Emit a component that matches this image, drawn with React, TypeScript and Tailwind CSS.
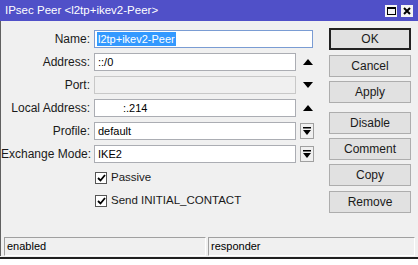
import React from "react";

const Up = () => (
  <svg width="10" height="6" viewBox="0 0 10 6"><path d="M0 6 L5 0 L10 6 Z" fill="#000" /></svg>
);
const Down = () => (
  <svg width="10" height="6" viewBox="0 0 10 6"><path d="M0 0 L5 6 L10 0 Z" fill="#000" /></svg>
);
const DropBtn = () => (
  <div className="w-[14px] h-[16px] border border-[#a0a0a0] bg-[#f0f0f0] flex items-center justify-center">
    <svg width="8" height="9" viewBox="0 0 8 9">
      <rect x="0" y="0" width="8" height="1.5" fill="#000" />
      <path d="M0 3 L8 3 L4 8 Z" fill="#000" />
    </svg>
  </div>
);

function Row({ label, children, mt }: { label: string; children: React.ReactNode; mt: string }) {
  return (
    <div className={`flex items-center h-[18px] ${mt}`}>
      <div className="w-[90px] text-right pr-[1px] text-[12px] text-[#1a1a1a] whitespace-nowrap">{label}</div>
      <div className="ml-[3px] flex items-center">{children}</div>
    </div>
  );
}

function Btn({ label, def, mt }: { label: string; def?: boolean; mt: string }) {
  return (
    <div
      className={`w-[82px] h-[22px] flex items-center justify-center text-[12px] text-[#1a1a1a] bg-[#e1e1e1] ${mt} ${
        def ? "border-2 border-[#222]" : "border border-[#adadad]"
      }`}
    >
      {label}
    </div>
  );
}

function Check({ label, mt }: { label: string; mt: string }) {
  return (
    <div className={`flex items-center h-[17px] ml-[94px] ${mt}`}>
      <div className="w-[12px] h-[12px] border border-[#555] bg-white flex items-center justify-center">
        <svg width="9" height="8" viewBox="0 0 9 8">
          <path d="M1 4 L3.5 6.5 L8 1" stroke="#000" strokeWidth="1.8" fill="none" />
        </svg>
      </div>
      <span className="ml-[4px] text-[11.5px] text-[#1a1a1a] whitespace-nowrap">{label}</span>
    </div>
  );
}

export default function App() {
  return (
    <div
      className="w-[418px] h-[265px] bg-[#f0f0f0] overflow-hidden flex flex-col"
      style={{ fontFamily: '"Liberation Sans", Arial, sans-serif' }}
    >
      <div className="h-[21px] bg-[#5050c8] flex items-center pl-[5px] pr-[5px] shrink-0">
        <span className="text-white text-[11.5px] flex-1 whitespace-nowrap">IPsec Peer &lt;l2tp+ikev2-Peer&gt;</span>
        <div className="w-[12px] h-[12px] bg-[#f4f4f4] flex items-center justify-center mr-[4px]">
          <div className="w-[9px] h-[8px] border border-black border-t-2" />
        </div>
        <div className="w-[12px] h-[12px] bg-[#f4f4f4] flex items-center justify-center">
          <svg width="8" height="8" viewBox="0 0 8 8">
            <path d="M1 1 L7 7 M7 1 L1 7" stroke="#000" strokeWidth="2" />
          </svg>
        </div>
      </div>
      <div className="flex border-l border-[#606060] flex-1">
        <div className="w-[328px] flex flex-col pt-[9px]">
          <Row label="Name:" mt="">
            <div className="w-[219px] h-[18px] border border-[#7a9cd3] bg-white flex items-center pl-[2px]">
              <span className="bg-[#3399ff] text-white text-[11px] leading-[14px] px-[1px]">l2tp+ikev2-Peer</span>
            </div>
          </Row>
          <Row label="Address:" mt="mt-[5px]">
            <div className="w-[202px] h-[18px] border border-[#abadb3] bg-white flex items-center pl-[3px] text-[11px]">::/0</div>
            <div className="ml-[7px]"><Up /></div>
          </Row>
          <Row label="Port:" mt="mt-[5px]">
            <div className="w-[202px] h-[18px] border border-[#c8c8c8] bg-[#f0f0f0]" />
            <div className="ml-[7px]"><Down /></div>
          </Row>
          <Row label="Local Address:" mt="mt-[5px]">
            <div className="w-[202px] h-[18px] border border-[#abadb3] bg-white flex items-center pl-[28px] text-[11px]">:.214</div>
            <div className="ml-[7px]"><Up /></div>
          </Row>
          <Row label="Profile:" mt="mt-[5px]">
            <div className="w-[202px] h-[18px] border border-[#abadb3] bg-white flex items-center pl-[3px] text-[11px]">default</div>
            <div className="ml-[4px]"><DropBtn /></div>
          </Row>
          <Row label="Exchange Mode:" mt="mt-[5px]">
            <div className="w-[202px] h-[18px] border border-[#abadb3] bg-white flex items-center pl-[3px] text-[11px]">IKE2</div>
            <div className="ml-[4px]"><DropBtn /></div>
          </Row>
          <Check label="Passive" mt="mt-[6px]" />
          <Check label="Send INITIAL_CONTACT" mt="mt-[6px]" />
        </div>
        <div className="flex flex-col pt-[7px]">
          <Btn label="OK" def mt="" />
          <Btn label="Cancel" mt="mt-[5px]" />
          <Btn label="Apply" mt="mt-[4px]" />
          <Btn label="Disable" mt="mt-[9px]" />
          <Btn label="Comment" mt="mt-[4px]" />
          <Btn label="Copy" mt="mt-[4px]" />
          <Btn label="Remove" mt="mt-[5px]" />
        </div>
      </div>
      <div className="flex h-[19px] px-[3px] gap-[2px] border-l border-[#606060] shrink-0 mb-[1px]">
        <div className="w-[202px] border-t border-l border-[#a0a0a0] border-b border-r border-b-white border-r-white text-[11px] flex items-center pl-[2px]">enabled</div>
        <div className="flex-1 border-t border-l border-[#a0a0a0] border-b border-r border-b-white border-r-white text-[11px] flex items-center pl-[2px]">responder</div>
      </div>
      <div className="h-[2px] bg-[#202020] shrink-0" />
      <div className="h-[6px] bg-white shrink-0" />
    </div>
  );
}
